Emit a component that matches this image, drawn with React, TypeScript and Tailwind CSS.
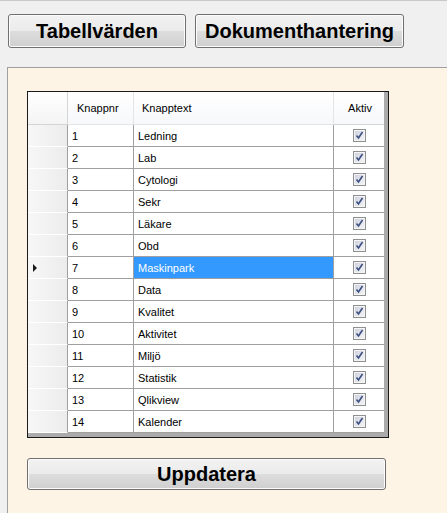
import React from 'react';

interface Row {
  nr: number;
  text: string;
}

const rows: Row[] = [
  { nr: 1, text: 'Ledning' },
  { nr: 2, text: 'Lab' },
  { nr: 3, text: 'Cytologi' },
  { nr: 4, text: 'Sekr' },
  { nr: 5, text: 'Läkare' },
  { nr: 6, text: 'Obd' },
  { nr: 7, text: 'Maskinpark' },
  { nr: 8, text: 'Data' },
  { nr: 9, text: 'Kvalitet' },
  { nr: 10, text: 'Aktivitet' },
  { nr: 11, text: 'Miljö' },
  { nr: 12, text: 'Statistik' },
  { nr: 13, text: 'Qlikview' },
  { nr: 14, text: 'Kalender' },
];

const SELECTED = 7;

const CheckBox = () => (
  <svg width="13" height="13" viewBox="0 0 13 13">
    <defs>
      <linearGradient id="cbfill" x1="0" y1="0" x2="1" y2="1">
        <stop offset="0" stopColor="#cfd3de" />
        <stop offset="1" stopColor="#f2f3f6" />
      </linearGradient>
    </defs>
    <rect x="0.5" y="0.5" width="12" height="12" fill="#f4f4f4" stroke="#8f9090" />
    <rect x="2" y="2" width="9" height="9" fill="url(#cbfill)" />
    <path d="M3.5 6.5 L5.5 9 L9.5 3" fill="none" stroke="#3c4f82" strokeWidth="1.6" />
  </svg>
);

const WinButton: React.FC<{ label: string; className: string }> = ({ label, className }) => (
  <button
    className={`rounded-[3px] border border-[#707070] bg-[linear-gradient(#f2f2f2_0%,#ebebeb_50%,#dddddd_51%,#cfcfcf_100%)] text-[20px] font-bold text-black shadow-[inset_0_0_0_1px_#fcfcfc] ${className}`}
  >
    {label}
  </button>
);

export default function App() {
  return (
    <div
      className="flex h-[513px] w-[447px] flex-col overflow-hidden border-t border-[#c8c8c8] bg-[#f0f0f0]"
      style={{ fontFamily: '"Liberation Sans", Arial, sans-serif' }}
    >
      <div className="flex gap-[9px] pl-[8px] pt-[13px]">
        <WinButton label="Tabellvärden" className="h-[34px] w-[178px]" />
        <WinButton label="Dokumenthantering" className="h-[34px] w-[209px]" />
      </div>

      <div className="ml-[7px] mt-[19px] flex-1 border-l border-t border-[#a0a0a0] bg-[#fdf4e6] pl-[19px] pt-[23px]">
        <div className="h-[347px] w-[362px] border border-[#1a1a1a] bg-[#ababab]">
          <div className="grid w-[356px] grid-cols-[40px_66px_200px_50px] bg-white text-[11px] text-black">
            {/* header */}
            <div className="h-[33px] border-b border-r border-[#d5d5d5] bg-[linear-gradient(#ffffff,#f4f4f4)]" />
            <div className="flex h-[33px] items-center border-b border-r border-[#e5e5e5] bg-[linear-gradient(#ffffff,#f7f8fa)] pl-[9px] pt-[1px]">
              Knappnr
            </div>
            <div className="flex h-[33px] items-center border-b border-r border-[#e5e5e5] bg-[linear-gradient(#ffffff,#f7f8fa)] pl-[8px] pt-[1px]">
              Knapptext
            </div>
            <div className="flex h-[33px] items-center justify-center border-b border-[#d5d5d5] bg-[linear-gradient(#ffffff,#f7f8fa)] pl-[2px] pt-[1px]">
              Aktiv
            </div>

            {rows.map((r) => (
              <React.Fragment key={r.nr}>
                <div className="flex h-[22px] items-center border-b border-r border-[#a0a0a0] border-b-[#ffffff] bg-[linear-gradient(90deg,#f7f7f7,#ececec)] pl-[5px]">
                  {r.nr === SELECTED && (
                    <svg width="5" height="8" viewBox="0 0 5 8">
                      <path d="M0 0 L4 4 L0 8 Z" fill="#1a1a1a" />
                    </svg>
                  )}
                </div>
                <div className="flex h-[22px] items-center border-b border-r border-[#a0a0a0] pl-[4px] pt-[2px]">
                  {r.nr}
                </div>
                <div
                  className={`flex h-[22px] items-center border-b border-r border-[#a0a0a0] pl-[4px] pt-[2px] ${
                    r.nr === SELECTED ? 'bg-[#3399ff] text-white' : ''
                  }`}
                >
                  {r.text}
                </div>
                <div className="flex h-[22px] items-center justify-center border-b border-[#a0a0a0] pl-[1px]">
                  <CheckBox />
                </div>
              </React.Fragment>
            ))}
          </div>
        </div>

        <WinButton label="Uppdatera" className="mt-[20px] h-[32px] w-[359px]" />
      </div>
    </div>
  );
}
